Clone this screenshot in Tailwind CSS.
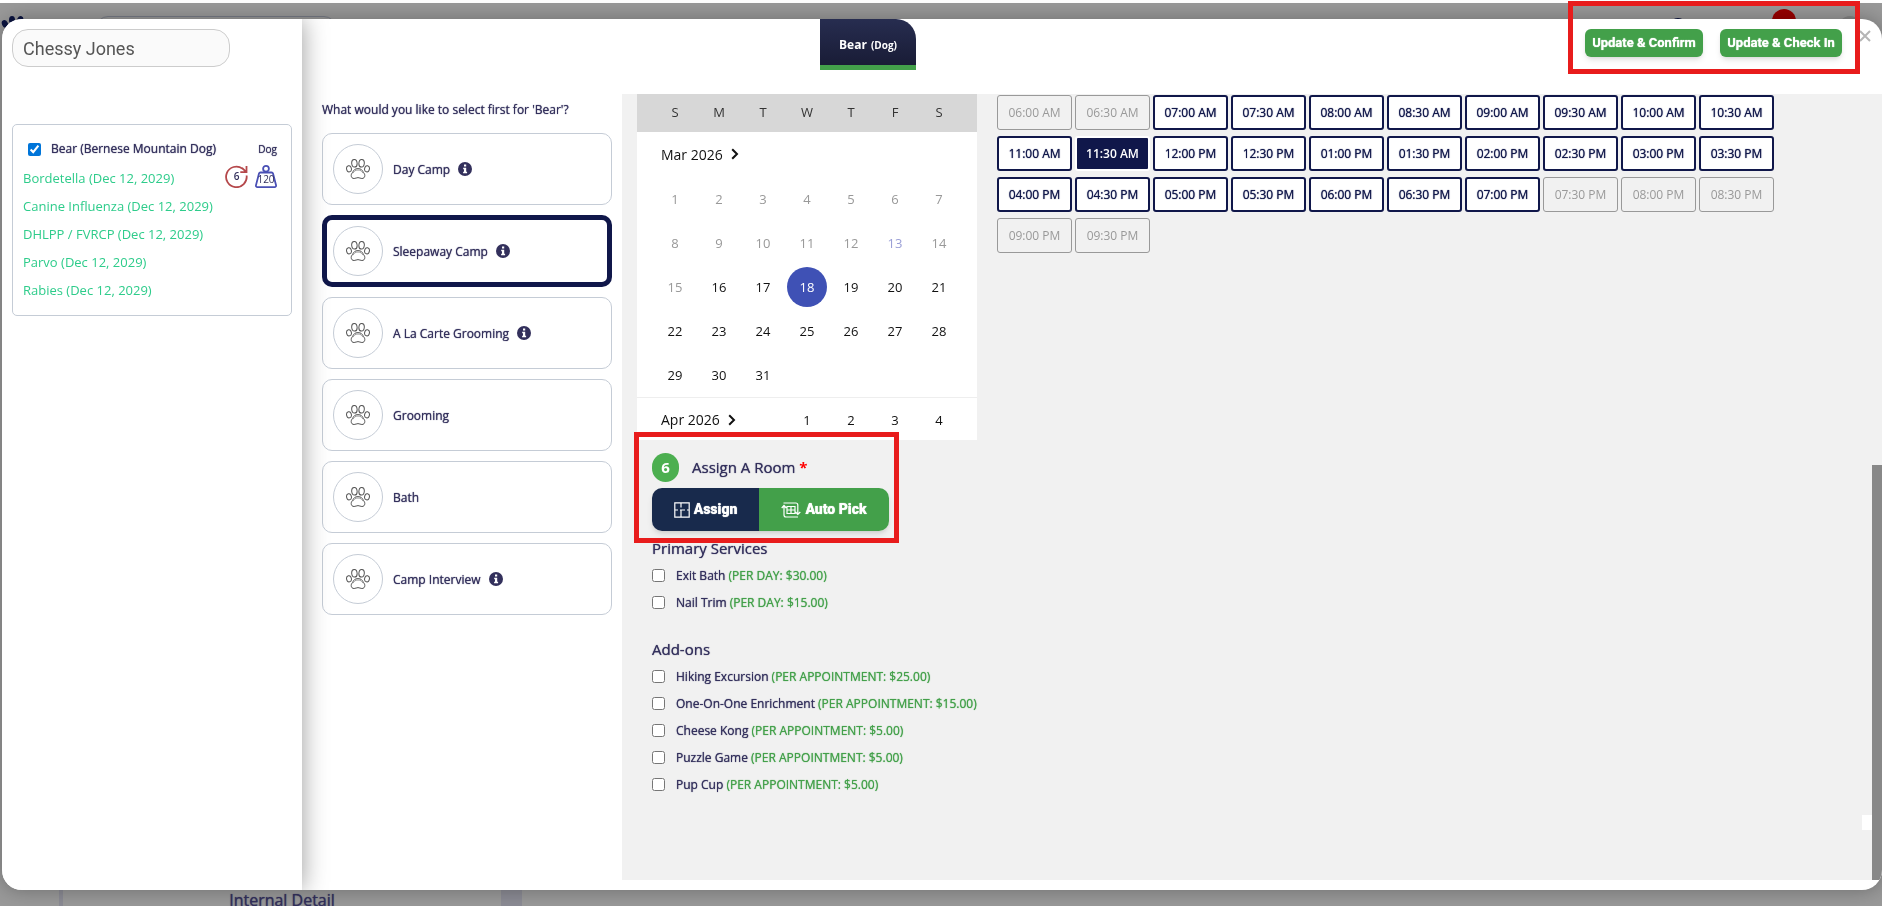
<!DOCTYPE html>
<html lang="en">

<head>
    <meta charset="UTF-8">
    <meta name="viewport" content="width=device-width, initial-scale=1.0">
    <title>Edit Appointment</title>
    <script src="https://cdn.jsdelivr.net/npm/@tailwindcss/browser@4"></script>
</head>

<body class="bg-white pt-[3px] h-screen overflow-hidden font-['Open_Sans',sans-serif] text-[13px] text-[#33305c]">

    <!-- Icons -->
    <svg class="hidden">
        <symbol id="paw" viewBox="0 0 24 20">
            <g fill="none" stroke="#555" stroke-width="1">
                <ellipse cx="3" cy="9.8" rx="2.4" ry="3.1" transform="rotate(-12 3 9.8)" />
                <ellipse cx="8.4" cy="4.3" rx="2.7" ry="3.8" transform="rotate(-5 8.4 4.3)" />
                <ellipse cx="15.6" cy="4.3" rx="2.7" ry="3.8" transform="rotate(5 15.6 4.3)" />
                <ellipse cx="21" cy="9.8" rx="2.4" ry="3.1" transform="rotate(12 21 9.8)" />
                <path d="M12 9.6c-3 0-4.400 1.500-5.100 3.200-.4 1-1.700 1.700-1.700 3.700 0 2 1.200 3 2.900 3 1.500 0 2.400-.9 3.900-.9s2.400.9 3.900.9c1.700 0 2.900-1 2.900-3 0-2-1.300-2.700-1.700-3.700-.7-1.700-2.100-3.200-5.100-3.200z" />
                <path d="M6.900 14.200c1-2 2.600-3.200 5.100-3.200s4.100 1.200 5.100 3.200" stroke-width=".6" />
            </g>
        </symbol>
        <symbol id="info" viewBox="0 0 14 14">
            <circle cx="7" cy="7" r="7" fill="#33305c" />
            <path fill="#fff" d="M6 2.500h2.200v2H6zM5.200 5.700h3v4h.9v1.600H5.100V9.700H6V7.300h-.8z" />
        </symbol>
        <symbol id="chevron" viewBox="0 0 8 12">
            <path d="M1.200 1.200 6 6l-4.800 4.800" fill="none" stroke="#111" stroke-width="2" />
        </symbol>
    </svg>

    <!-- Page behind the modal -->
    <div class="h-full bg-[#999] flex flex-col justify-between overflow-hidden">
        <header class="flex items-start justify-between pt-[13px]">
            <div class="flex items-start gap-[70px]">
                <svg class="w-[26px] h-5" viewBox="0 0 26 20" fill="#0b1440">
                    <ellipse cx="5" cy="8" rx="3" ry="4" transform="rotate(-25 5 8)" />
                    <ellipse cx="12" cy="4" rx="3" ry="4" />
                    <ellipse cx="20" cy="4" rx="3" ry="4" transform="rotate(25 20 4)" />
                </svg>
                <div class="w-60 h-8 rounded-xl border border-[#777b85]"></div>
            </div>
            <div class="flex items-start">
                <div class="w-4 h-4 mt-[2px] mr-[86px] rounded-full bg-[#0b1440]"></div>
                <div class="w-6 h-6 -mt-[7px] mr-[42px] rounded-full bg-[#990000]"></div>
                <div class="w-6 h-6 mr-5 rounded-full bg-[#858585]"></div>
            </div>
        </header>
        <div class="flex h-[18px] text-[16px] leading-[24px]">
            <div class="w-[59px]"></div>
            <div class="w-[442px] border-l-4 border-[#8b8b94] text-center [text-shadow:0_0_1px_currentColor]">Internal Detail</div>
            <div class="w-[21px] bg-[#8b8b94]"></div>
        </div>
    </div>

    <!-- Modal Start -->
    <div class="fixed top-[19px] left-[2px] right-0 bottom-4 flex bg-white rounded-[20px] overflow-hidden shadow-[0_0_20px_rgba(0,0,0,0.3)]">

        <!-- Customer sidebar -->
        <aside class="w-[300px] shrink-0 px-[10px] pt-[10px] bg-white shadow-[0_0_24px_rgba(0,0,0,0.4)] z-10">
            <input type="text" aria-label="Customer" value="Chessy Jones"
                class="block w-[218px] h-[38px] px-[10px] rounded-[16px] border border-[#ccc] bg-[#fafafa] font-['Roboto',sans-serif] text-[18px] text-[#555]">

            <div class="mt-[57px] h-[192px] pr-[14px] pl-[10px] pt-[10px] rounded-[5px] border border-[#c5ccd6] flex justify-between">
                <div>
                    <label class="flex items-center gap-[10px] h-7 pl-[5px] text-[12px] whitespace-nowrap [text-shadow:0_0_1px_currentColor]">
                        <input type="checkbox" checked class="w-[13px] h-[13px] accent-[#0075d9]">
                        Bear (Bernese Mountain Dog)
                    </label>
                    <ul class="pt-px text-[#2ecc8b] leading-[28px] whitespace-nowrap">
                        <li>Bordetella (Dec 12, 2029)</li>
                        <li>Canine Influenza (Dec 12, 2029)</li>
                        <li>DHLPP / FVRCP (Dec 12, 2029)</li>
                        <li>Parvo (Dec 12, 2029)</li>
                        <li>Rabies (Dec 12, 2029)</li>
                    </ul>
                </div>
                <div class="-ml-10 flex flex-col items-end text-[10px]">
                    <span class="h-7 leading-[28px] [text-shadow:0_0_1px_currentColor]">Dog</span>
                    <div class="flex gap-[7px] pt-[2px]">
                        <svg class="w-[23px] h-[23px]" viewBox="0 0 23 23">
                            <path d="M21.600 10.500A10.300 10.300 0 1 1 17.500 3.600" fill="none" stroke="#b5484b" stroke-width="1.800" />
                            <path d="M21.500 1v6.200h-6.200M21.500 7.200 17 3" fill="none" stroke="#b5484b" stroke-width="1.800" />
                            <text x="11.500" y="15" text-anchor="middle" font-size="10" font-weight="600" fill="#33305c">6</text>
                        </svg>
                        <svg class="w-[22px] h-[23px]" viewBox="0 0 22 23">
                            <circle cx="11" cy="3.800" r="2.900" fill="none" stroke="#4a50b5" stroke-width="1.800" />
                            <path d="M5.400 7.500h11.200c.7 0 1.200.4 1.400 1.100l3 11.500c.3 1.200-.3 2-1.500 2H2.500c-1.200 0-1.800-.8-1.500-2l3-11.500c.2-.7.7-1.100 1.400-1.100z" fill="none" stroke="#4a50b5" stroke-width="1.800" />
                            <text x="11" y="18" text-anchor="middle" font-size="10" font-weight="500" fill="#33305c">120</text>
                        </svg>
                    </div>
                </div>
            </div>
        </aside>

        <div class="flex-1 min-w-0 flex flex-col">

            <!-- Top bar -->
            <div class="h-[75px] shrink-0 flex justify-between">
                <div class="ml-[518px] w-24 h-[51px] pt-[6px] rounded-tr-[20px] border-b-[5px] border-[#43a04a] bg-linear-to-b from-[#272d50] to-[#191c36] text-white font-bold text-[12px] flex items-center justify-center gap-1">
                    Bear <span class="text-[10px]">(Dog)</span>
                </div>
                <div class="flex items-start gap-[17px] pt-[10px] font-['Roboto',sans-serif] font-bold text-[13px] text-white">
                    <button type="button" class="w-[118px] h-7 rounded-md bg-[#43a04a] shadow-md [text-shadow:0_0_1px_currentColor]">Update &amp; Confirm</button>
                    <button type="button" class="w-[122px] h-7 rounded-md bg-[#43a04a] shadow-md [text-shadow:0_0_1px_currentColor]">Update &amp; Check In</button>
                    <button type="button" aria-label="Close" class="mr-[11px] mt-px">
                        <svg class="w-3 h-3" viewBox="0 0 12 12"><path d="M1 1l10 10M11 1 1 11" stroke="#b5b5b5" stroke-width="2" /></svg>
                    </button>
                </div>
            </div>

            <div class="flex-1 min-h-0 flex">

                <!-- Services -->
                <section class="w-80 shrink-0 pl-5 pr-[10px] text-[12px]">
                    <h2 class="h-[39px] leading-[32px] [text-shadow:0_0_1px_currentColor]">What would you like to select first for 'Bear'?</h2>
                    <div id="services" class="flex flex-col gap-[10px]"></div>
                </section>

                <!-- Appointment details -->
                <section class="flex-1 min-w-0 flex gap-5 mb-[10px] pl-[15px] bg-[#f1f1f1]">
                    <div class="w-[340px] shrink-0">
                        <div class="h-[346px] overflow-hidden bg-white text-[#111]">
                            <div class="grid grid-cols-7 h-[38px] px-4 items-center text-center bg-[#d7d7d7] text-[#333]">
                                <span>S</span><span>M</span><span>T</span><span>W</span><span>T</span><span>F</span><span>S</span>
                            </div>
                            <div class="pt-px">
                                <button type="button" class="flex items-center gap-2 h-11 pb-[2px] pl-6 text-[14px]">Mar 2026
                                    <svg class="w-2 h-3"><use href="#chevron" /></svg></button>
                                <div id="march" class="grid grid-cols-7 px-4"></div>
                            </div>
                            <div class="flex h-11 pr-4 pl-6 justify-between border-t border-[#eee]">
                                <button type="button" class="flex items-center gap-2 text-[14px]">Apr 2026
                                    <svg class="w-2 h-3"><use href="#chevron" /></svg></button>
                                <div id="april" class="grid grid-cols-4 w-44"></div>
                            </div>
                        </div>

                        <!-- Room -->
                        <div class="relative pl-[15px] pt-[13px]">
                            <div class="flex items-center h-[29px] mb-[6px] text-[15px]">
                                <span class="w-[27px] h-[29px] mr-[13px] rounded-full bg-[#4caf50] text-white font-bold flex items-center justify-center">6</span>
                                <span class="[text-shadow:0_0_1px_currentColor]">Assign A Room&nbsp;</span><span class="text-[#f00] font-bold">*</span>
                            </div>
                            <div class="inline-flex h-[43px] rounded-[10px] overflow-hidden shadow-md font-['Roboto',sans-serif] font-black text-[14px] text-white align-top">
                                <button type="button" class="w-[107px] bg-[#182a4c] flex items-center justify-center gap-1 [text-shadow:0_0_1px_currentColor]">
                                    <svg class="w-4 h-4" viewBox="0 0 16 16" fill="none" stroke="#fff" stroke-width="1.200"><path d="M.800.800h14.400v14.400H.800zM7 1v4.500M7 8v7M1 8h3M6 8h5M13 8h2" /></svg>
                                    Assign
                                </button>
                                <button type="button" class="w-[130px] bg-[#43a04a] flex items-center justify-center gap-1 [text-shadow:0_0_1px_currentColor]">
                                    <svg class="w-5 h-4" viewBox="0 0 20 16" fill="none" stroke="#fff" stroke-width="1.200"><path d="M2.500 1h12.300q2 0 2 2v9M14.500 10l2.300 2.500 2.500-2.500M17 15H5q-2 0-2-2V4M.700 6 3 3.500 5.300 6M6 4.500h8v7H6zM6 8h8M10 4.500v7" /></svg>
                                    Auto Pick
                                </button>
                            </div>
                            <div class="absolute -left-[3px] -top-[8px] w-[265px] h-[111px] z-10 border-[5px] border-[#e81c1c] pointer-events-none"></div>
                        </div>

                        <div class="pl-[15px] pt-1 text-[12px]">
                            <h3 class="h-[27px] leading-[26px] text-[15px] [text-shadow:0_0_1px_currentColor]">Primary Services</h3>
                            <div id="primary"></div>
                            <h3 class="h-[27px] leading-[26px] mt-5 text-[15px] [text-shadow:0_0_1px_currentColor]">Add-ons</h3>
                            <div id="addons"></div>
                        </div>
                    </div>

                    <div id="slots" class="flex-1 flex flex-wrap content-start gap-x-[3px] gap-y-[6px] pt-px max-w-[780px] text-[12px]"></div>
                </section>

                <!-- Scrollbar -->
                <div class="w-[10px] shrink-0 mb-[10px] bg-[#f1f1f1] flex flex-col justify-end">
                    <div class="h-[415px] bg-[#888]"></div>
                </div>
            </div>
        </div>
    </div>
    <!-- Modal End -->

    <div class="absolute right-[22px] top-px w-[292px] h-[73px] border-[5px] border-[#e81c1c] pointer-events-none"></div>
    <div class="absolute right-[10px] bottom-[76px] w-[10px] h-[15px] bg-white"></div>

    <script>
        const byId = id => document.getElementById(id);

        // Services
        const services = [['Day Camp', 1], ['Sleepaway Camp', 1], ['A La Carte Grooming', 1], ['Grooming', 0], ['Bath', 0], ['Camp Interview', 1]];
        byId('services').innerHTML = services.map(([name, info]) => `
            <button type="button" class="h-[72px] rounded-[10px] flex items-center text-left [text-shadow:0_0_1px_currentColor] ${name === 'Sleepaway Camp' ? 'border-[5px] border-[#10174a] px-[6px]' : 'border border-[#c5ccd6] px-[10px]'}">
                <span class="w-[50px] h-[50px] mr-[10px] rounded-full border border-[#c5ccd6] flex items-center justify-center">
                    <svg class="w-6 h-5"><use href="#paw"/></svg>
                </span><span class="pt-px">${name}</span>
                ${info ? '<svg class="w-[14px] h-[14px] ml-2"><use href="#info"/></svg>' : ''}
            </button>`).join('');

        // Calendar days
        function day(n, past) {
            let look = past ? 'text-[#999]' : '';
            if (past && n === 13) look = 'text-[#9a9fd6]';
            if (!past && n === 18) look = 'bg-[#3f51b5] text-white';
            return `<button type="button" class="w-10 h-10 m-[2px] pt-[2px] rounded-full ${look}">${n}</button>`;
        }
        byId('march').innerHTML = Array.from({ length: 31 }, (_, i) => day(i + 1, i < 15)).join('');
        byId('april').innerHTML = [1, 2, 3, 4].map(n => day(n, false)).join('');

        // Extra services
        function extra([name, price]) {
            return `<label class="flex items-center h-[27px] whitespace-nowrap">
                <input type="checkbox" class="w-[13px] h-[13px] mr-[11px]"><span class="[text-shadow:0_0_1px_currentColor]">${name}&nbsp;</span><span class="text-[#43a04a] [text-shadow:0_0_1px_currentColor]">(${price})</span></label>`;
        }
        byId('primary').innerHTML = [['Exit Bath', 'PER DAY: $30.00'], ['Nail Trim', 'PER DAY: $15.00']].map(extra).join('');
        byId('addons').innerHTML = [
            ['Hiking Excursion', 'PER APPOINTMENT: $25.00'],
            ['One-On-One Enrichment', 'PER APPOINTMENT: $15.00'],
            ['Cheese Kong', 'PER APPOINTMENT: $5.00'],
            ['Puzzle Game', 'PER APPOINTMENT: $5.00'],
            ['Pup Cup', 'PER APPOINTMENT: $5.00']
        ].map(extra).join('');

        // Time slots, every 30 minutes from 6 AM
        let html = '';
        for (let i = 0; i < 32; i++) {
            const hour = 6 + Math.floor(i / 2);
            const h12 = hour > 12 ? hour - 12 : hour;
            const label = String(h12).padStart(2, '0') + (i % 2 ? ':30 ' : ':00 ') + (hour < 12 ? 'AM' : 'PM');
            const closed = i < 2 || i > 26;
            let look = 'border-2 border-[#10174a] bg-white text-[#10174a] [text-shadow:0_0_1px_currentColor]';
            if (closed) look = 'border border-[#999] text-[#999]';
            if (label === '11:30 AM') look = 'border-2 border-white bg-[#10174a] text-white font-semibold';
            html += `<button type="button" ${closed ? 'disabled' : ''} class="w-[75px] h-[35px] rounded-[3px] whitespace-nowrap ${look}">${label}</button>`;
        }
        byId('slots').innerHTML = html;
    </script>
</body>

</html>
